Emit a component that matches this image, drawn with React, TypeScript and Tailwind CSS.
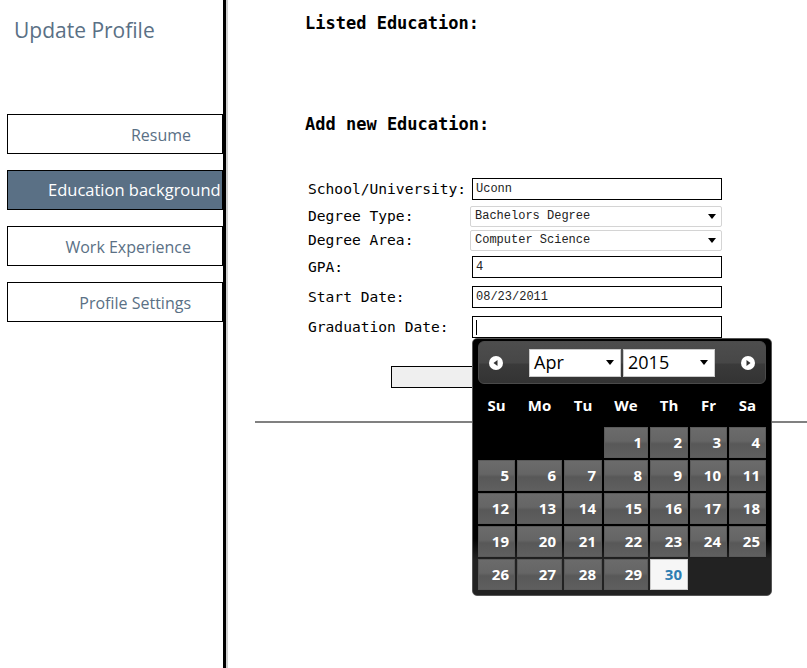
const navItems = ['Resume', 'Education background', 'Work Experience', 'Profile Settings']

const weeks: (number | null)[][] = [
  [null, null, null, 1, 2, 3, 4],
  [5, 6, 7, 8, 9, 10, 11],
  [12, 13, 14, 15, 16, 17, 18],
  [19, 20, 21, 22, 23, 24, 25],
  [26, 27, 28, 29, 30, null, null],
]

function Caret() {
  return (
    <svg width="8" height="5" viewBox="0 0 8 5" className="shrink-0">
      <path d="M0 0h8L4 5z" fill="#000" />
    </svg>
  )
}

function Field({ label, value, cursor }: { label: string; value?: string; cursor?: boolean }) {
  return (
    <div className="flex items-center h-[30px]">
      <span className="w-[164px]">{label}</span>
      <div className="w-[250px] h-[22px] border border-black bg-white flex items-center px-[3px] text-[12px] font-['Liberation_Mono',monospace] text-[#222]">
        {value}
        {cursor && <span className="w-px h-[15px] bg-black" />}
      </div>
    </div>
  )
}

function SelectField({ label, value }: { label: string; value: string }) {
  return (
    <div className="flex items-center h-[24px]">
      <span className="w-[162px]">{label}</span>
      <div className="w-[252px] h-[21px] border border-[#d4d4d4] rounded-[2px] bg-white flex items-center justify-between pl-[4px] pr-[5px] text-[12px] font-['Liberation_Mono',monospace] text-[#222]">
        {value}
        <Caret />
      </div>
    </div>
  )
}

function NavArrow({ dir }: { dir: 'l' | 'r' }) {
  return (
    <svg width="14" height="14" viewBox="0 0 14 14">
      <circle cx="7" cy="7" r="7" fill="#fff" />
      {dir === 'l' ? <path d="M8.5 4v6L4.5 7z" fill="#333" /> : <path d="M5.5 4v6l4-3z" fill="#333" />}
    </svg>
  )
}

function Calendar() {
  return (
    <div className="absolute left-[246px] top-[338px] w-[300px] h-[258px] border border-[#555] rounded-[5px] bg-[linear-gradient(#000_0%,#000_78%,#222_86%,#222_100%)] px-[5px] pt-[2px] font-['Open_Sans',sans-serif]">
      <div className="h-[43px] rounded-[6px] border border-[#4a4a4a] bg-[linear-gradient(#4d4d4d_0%,#474747_50%,#3a3a3a_55%,#333_100%)] flex items-center justify-between px-[10px]">
        <NavArrow dir="l" />
        <div className="flex gap-[2px]">
          <div className="w-[92px] h-[28px] bg-white border border-[#ccc] flex items-center justify-between pl-[4px] pr-[6px] text-[18px] text-black">
            Apr
            <Caret />
          </div>
          <div className="w-[92px] h-[28px] bg-white border border-[#ccc] flex items-center justify-between pl-[4px] pr-[6px] text-[18px] text-black">
            2015
            <Caret />
          </div>
        </div>
        <NavArrow dir="r" />
      </div>
      <div className="grid grid-cols-[37px_45px_38px_44px_38px_37px_37px] gap-[2px] text-white font-bold text-[15px]">
        {['Su', 'Mo', 'Tu', 'We', 'Th', 'Fr', 'Sa'].map((d) => (
          <div key={d} className="h-[41px] flex items-center justify-center pt-[2px]">
            {d}
          </div>
        ))}
        {weeks.flat().map((d, i) =>
          d === null ? (
            <div key={i} className="h-[31px]" />
          ) : d === 30 ? (
            <div key={i} className="h-[31px] bg-[#f6f6f6] border border-[#ccc] text-[#2e7db2] flex items-center justify-end pr-[5px]">
              {d}
            </div>
          ) : (
            <div
              key={i}
              className="h-[31px] border border-[#5a5a5a] bg-[linear-gradient(#6b6b6b_0%,#656565_45%,#585858_55%,#5f5f5f_100%)] flex items-center justify-end pr-[5px]"
            >
              {d}
            </div>
          ),
        )}
      </div>
    </div>
  )
}

export default function App() {
  return (
    <div className="flex min-h-[668px] bg-white">
      <aside className="w-[226px] shrink-0 border-r-[3px] border-black shadow-[2px_0_0_#d0d0d0] font-['Open_Sans',sans-serif]">
        <h1 className="pl-[14px] pt-[15px] text-[21px] text-[#5a7085] leading-[30px]">Update Profile</h1>
        <nav className="mt-[69px] flex flex-col gap-[16px] pl-[7px]">
          {navItems.map((item) =>
            item === 'Education background' ? (
              <div
                key={item}
                className="h-[40px] border border-black bg-[#5a7085] text-white text-[16.5px] flex items-center pt-[1px] pl-[48px] -indent-[8px] whitespace-nowrap overflow-hidden"
              >
                {item}
              </div>
            ) : (
              <div key={item} className="h-[40px] border border-black text-[#5a7085] text-[16px] flex items-center justify-end pt-[1px] pr-[31px]">
                {item}
              </div>
            ),
          )}
        </nav>
      </aside>

      <main className="relative flex-1 pt-[13px] font-['DejaVu_Sans_Mono',monospace] text-[14.6px] text-black">
        <h2 className="pl-[79px] text-[17px] font-bold leading-[20px]">Listed Education:</h2>
        <h2 className="pl-[79px] mt-[81px] text-[17px] font-bold leading-[20px]">Add new Education:</h2>
        <div className="pl-[82px] mt-[40px] flex flex-col">
          <Field label="School/University:" value="Uconn" />
          <SelectField label="Degree Type:" value="Bachelors Degree" />
          <SelectField label="Degree Area:" value="Computer Science" />
          <Field label="GPA:" value="4" />
          <Field label="Start Date:" value="08/23/2011" />
          <Field label="Graduation Date:" cursor />
        </div>
        <div className="pl-[165px] mt-[24px]">
          <div className="w-[160px] h-[22px] bg-[#efefef] border border-black" />
        </div>
        <div className="ml-[29px] mt-[33px] h-[2px] bg-[#808080]" />
        <Calendar />
      </main>
    </div>
  )
}
